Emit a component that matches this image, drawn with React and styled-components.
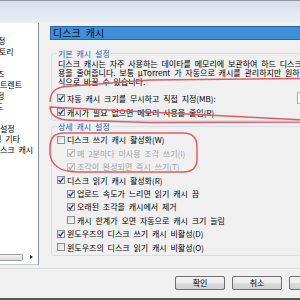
import React from 'react'
import styled, { createGlobalStyle } from 'styled-components'

const GlobalStyle = createGlobalStyle`
  html, body {
    margin: 0;
    padding: 0;
    overflow: hidden;
    background: #f0f0f0;
  }
  body {
    font-family: "Noto Sans CJK KR", "Noto Sans", sans-serif;
    font-size: 8px;
    color: #000;
  }
`

const Dialog = styled.div`
  position: relative;
  width: 342px;
  height: 300px;
  display: flex;
  flex-direction: column;
  background: #f0f0f0;
  border-top: 1px solid #8c97a3;
  box-sizing: border-box;
  overflow: hidden;
`

const TopBand = styled.div`
  height: 21px;
  background: linear-gradient(#d8e2ed, #e6ecf2);
`

const Main = styled.div`
  display: flex;
  height: 246px;
  padding-top: 1px;
  box-sizing: border-box;
`

const TreePanel = styled.div`
  width: 38px;
  height: 241px;
  background: #fff;
  border-right: 1px solid #8a9099;
  border-bottom: 1px solid #c9ccd1;
  display: flex;
  flex-direction: column;
  overflow: hidden;
`

const TreeList = styled.ul`
  list-style: none;
  margin: 0;
  padding: 2.5px 0 0;
  flex: 1;
`

const TreeItem = styled.li`
  height: 10.9px;
  line-height: 10.9px;
  white-space: nowrap;
  word-spacing: 2px;
  margin-left: ${p => p.$cut || 0}px;
`

const HScroll = styled.div`
  height: 10px;
  margin-bottom: 2px;
  display: flex;
  align-items: center;
  gap: 7px;
`

const Thumb = styled.div`
  width: 23px;
  height: 7px;
  box-sizing: border-box;
  border: 1px solid #9aa0a6;
  border-left: none;
  border-radius: 0 2px 2px 0;
  background: linear-gradient(#f4f4f4, #dadada);
`

const Arrow = styled.span`
  width: 0;
  height: 0;
  border-top: 2.5px solid transparent;
  border-bottom: 2.5px solid transparent;
  border-left: 3px solid #222;
`

const Content = styled.div`
  flex: 1;
  margin-left: 11px;
  padding: 3px 1px 0 0;
  display: flex;
  flex-direction: column;
`

const TitleBar = styled.div`
  height: 14px;
  box-sizing: border-box;
  background: #3d8fd8;
  border: 1px solid #2566a6;
  border-right: none;
  padding-left: 2px;
  font-size: 10px;
  line-height: 12px;
  word-spacing: 3px;
  color: #0a1420;
`

const Group = styled.fieldset`
  margin: ${p => p.$top}px 0 0 1px;
  border: 1px solid #d5dfe5;
  border-radius: 3px;
  padding: 0 3px ${p => p.$bottom}px 5px;
  min-width: 0;
`

const Legend = styled.legend`
  padding: 0 1px;
  margin: 0;
  color: #2060c0;
  line-height: 9px;
  word-spacing: 2px;
`

const Desc = styled.p`
  margin: 1px 0 0 1px;
  line-height: 9px;
  white-space: nowrap;
  word-spacing: 2px;
`

const Rows = styled.div`
  display: flex;
  flex-direction: column;
  padding-top: ${p => p.$top}px;
`

const Row = styled.label`
  height: ${p => p.$h}px;
  display: flex;
  align-items: center;
  padding-left: ${p => (p.$indent ? 10 : 0)}px;
  white-space: nowrap;
  word-spacing: 2px;
  color: ${p => (p.$disabled ? '#a3a3a3' : '#000')};
`

const Box = styled.span`
  width: 8px;
  height: 8px;
  box-sizing: border-box;
  flex-shrink: 0;
  margin-right: 2px;
  display: inline-flex;
  align-items: center;
  justify-content: center;
  border: 1px solid ${p => (p.$disabled ? '#c4c4c4' : '#8e8f8f')};
  background: ${p =>
    p.$disabled ? '#f5f5f5' : 'linear-gradient(135deg, #d8d8d8, #fdfdfd)'};
`

const NumberField = styled.span`
  margin-left: auto;
  width: 40px;
  height: 12px;
  box-sizing: border-box;
  background: #fff;
  border: 1px solid #abadb3;
`

const Footer = styled.div`
  flex: 1;
  border-top: 1px solid #dadada;
  border-bottom: 2px solid #5a5a5a;
  display: flex;
  justify-content: flex-end;
  align-items: flex-start;
  gap: 7px;
  padding: 7px 3px 0 0;
`

const Button = styled.button`
  width: 50px;
  height: 14px;
  padding: 0;
  border: 1px solid #707070;
  border-radius: 2px;
  background: linear-gradient(#f2f2f2 0%, #ebebeb 50%, #dddddd 51%, #cfcfcf 100%);
  font-family: inherit;
  font-size: 8px;
  line-height: 12px;
  color: #000;
`

const Marks = styled.svg`
  position: absolute;
  left: 0;
  top: 0;
  pointer-events: none;
`

const treeItems = [
  { label: '' },
  { label: '정', cut: -2 },
  { label: '토리', cut: -1 },
  { label: '' },
  { label: '즈', cut: -3 },
  { label: '트렌트' },
  { label: '정', cut: -3 },
  { label: '도', cut: -4 },
  { label: '' },
  { label: '설정' },
  { label: '행 기타', cut: -6 },
  { label: '스크 캐시' },
]

const Check = ({ checked, disabled }) => (
  <Box $disabled={disabled}>
    {checked && (
      <svg width="6" height="6" viewBox="0 0 6 6">
        <path
          d="M0.6 3.2 L2.3 5 L5.4 0.6"
          fill="none"
          stroke={disabled ? '#a8a8a8' : '#1f3a86'}
          strokeWidth="1.3"
        />
      </svg>
    )}
  </Box>
)

const Option = ({ text, checked, disabled, indent, h = 14, children }) => (
  <Row $h={h} $indent={indent} $disabled={disabled}>
    <Check checked={checked} disabled={disabled} />
    {text}
    {children}
  </Row>
)

const App = () => {
  return (
    <>
      <GlobalStyle />
      <Dialog>
        <TopBand />
        <Main>
          <TreePanel>
            <TreeList>
              {treeItems.map((item, i) => (
                <TreeItem key={i} $cut={item.cut}>
                  {item.label}
                </TreeItem>
              ))}
            </TreeList>
            <HScroll>
              <Thumb />
              <Arrow />
            </HScroll>
          </TreePanel>

          <Content>
            <TitleBar>디스크 캐시</TitleBar>

            <Group $top={8.5} $bottom={1}>
              <Legend>기본 캐시 설정</Legend>
              <Desc>
                디스크 캐시는 자주 사용하는 데이타를 메모리에 보관하여 하드 디스크 사
                <br />
                용을 줄여줍니다. 보통 µTorrent 가 자동으로 캐시를 관리하지만 원하는 방
                <br />
                식으로 바꿀 수 있습니다.
              </Desc>
              <Rows $top={5.5}>
                <Option text="자동 캐시 크기를 무시하고 직접 지정(MB):" checked>
                  <NumberField />
                </Option>
                <Option text="캐시가 필요 없으면 메모리 사용을 줄임(R)" checked />
              </Rows>
            </Group>

            <Group $top={0.5} $bottom={1}>
              <Legend>상세 캐시 설정</Legend>
              <Rows $top={2.8}>
                <Option h={13.4} text="디스크 쓰기 캐시 활성화(W)" />
                <Option h={13.4} indent disabled checked text="매 2분마다 미사용 조각 쓰기(I)" />
                <Option h={13.4} indent disabled checked text="조각이 완성되면 즉시 쓰기(T)" />
                <Option h={13.4} checked text="디스크 읽기 캐시 활성화(R)" />
                <Option h={13.4} indent checked text="업로드 속도가 느리면 읽기 캐시 끔" />
                <Option h={13.4} indent checked text="오래된 조각을 캐시에서 제거" />
                <Option h={13.4} indent text="캐시 한계가 오면 자동으로 캐시 크기 늘림" />
                <Option h={13.4} checked text="윈도우즈의 디스크 쓰기 캐시 비활성(D)" />
                <Option h={13.4} text="윈도우즈의 디스크 읽기 캐시 비활성(O)" />
              </Rows>
            </Group>
          </Content>
        </Main>

        <Footer>
          <Button>확인</Button>
          <Button>취소</Button>
          <Button>적용</Button>
        </Footer>

        <Marks width="342" height="300" viewBox="0 0 342 300">
          <path
            d="M50 101 C50 91 55 86.5 66 85.5 L150 79 L345 77 M345 121 L150 121.5 L67 119 C56 118.5 50 113 50 106 Z"
            fill="none"
            stroke="#e25b5f"
            strokeWidth="1.5"
          />
          <path
            d="M64 132 L183 132 Q197 132 197 146 L197 158 Q197 171 183 171 L76 171 Q52 170 50 153 L50 146 Q50 132 64 132 Z"
            fill="none"
            stroke="#e25b5f"
            strokeWidth="1.5"
          />
        </Marks>
      </Dialog>
    </>
  )
}

export default App
